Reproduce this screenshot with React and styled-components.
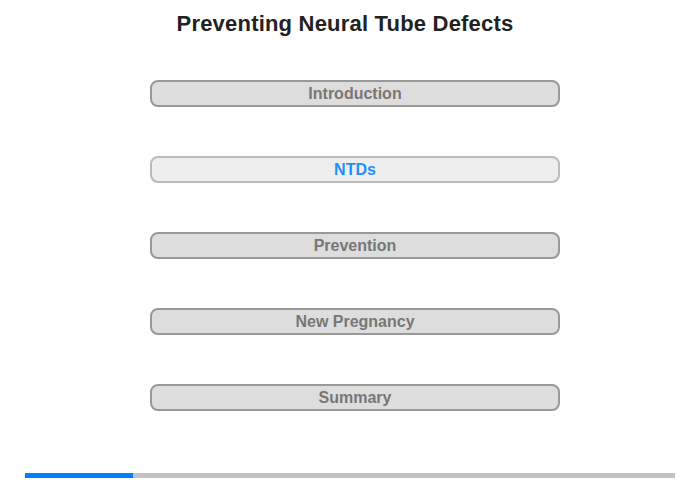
import styled, { createGlobalStyle } from "styled-components";

const Global = createGlobalStyle`
  body {
    margin: 0;
    background: #fff;
    font-family: "Liberation Sans", Arial, sans-serif;
  }
`;

const Page = styled.div`
  width: 700px;
  height: 480px;
  display: flex;
  flex-direction: column;
  align-items: center;
`;

const Title = styled.h1`
  margin: 11px 10px 0 0;
  font-size: 22px;
  line-height: 26px;
  letter-spacing: 0.2px;
  font-weight: bold;
  color: #222;
`;

const Menu = styled.div`
  align-self: flex-start;
  margin: 43px 0 0 150px;
  display: flex;
  flex-direction: column;
  gap: 49px;
`;

const Item = styled.div`
  box-sizing: border-box;
  width: 410px;
  height: 27px;
  border: 2px solid ${(p) => (p.active ? "#bbb" : "#999")};
  border-radius: 8px;
  background: ${(p) => (p.active ? "#eee" : "#ddd")};
  color: ${(p) => (p.active ? "#1e90ff" : "#777")};
  font-size: 16px;
  font-weight: bold;
  display: flex;
  align-items: center;
  justify-content: center;
`;

const Track = styled.div`
  margin-top: auto;
  margin-bottom: 2px;
  width: 650px;
  height: 5px;
  background: #c2c2c2;
  display: flex;
`;

const Fill = styled.div`
  height: 100%;
  background: #0080ff;
`;

const items = ["Introduction", "NTDs", "Prevention", "New Pregnancy", "Summary"];

export default function App() {
  return (
    <Page>
      <Global />
      <Title>Preventing Neural Tube Defects</Title>
      <Menu>
        {items.map((t) => (
          <Item key={t} active={t === "NTDs"}>
            {t}
          </Item>
        ))}
      </Menu>
      <Track>
        <Fill style={{ width: `${(1 / 6) * 100}%` }} />
      </Track>
    </Page>
  );
}
